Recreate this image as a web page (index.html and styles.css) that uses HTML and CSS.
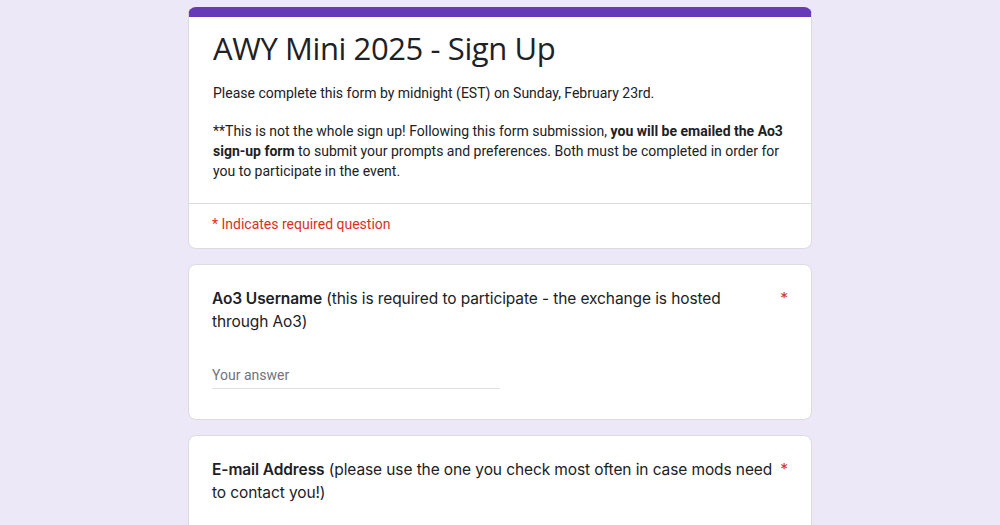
FILE: index.html
```html
<!DOCTYPE html>
<html lang="en">
<head>
<meta charset="utf-8">
<title>AWY Mini 2025 - Sign Up</title>
<link rel="stylesheet" href="styles.css">
</head>
<body>
<main class="form">
  <section class="card header-card">
    <div class="header-main">
      <h1 class="form-title">AWY Mini 2025 - Sign Up</h1>
      <div class="form-desc">
        <p>Please complete this form by midnight (EST) on Sunday, February 23rd.</p>
        <p>**This is not the whole sign up! Following this form submission, <b>you will be emailed the Ao3 sign-up form</b> to submit your prompts and preferences. Both must be completed in order for you to participate in the event.</p>
      </div>
    </div>
    <div class="required-note">* Indicates required question</div>
  </section>

  <section class="card question">
    <div class="q-title">
      <span class="q-text"><b>Ao3 Username</b> (this is required to participate - the exchange is hosted through Ao3)</span>
      <span class="q-req">*</span>
    </div>
    <div class="answer">Your answer</div>
  </section>

  <section class="card question">
    <div class="q-title">
      <span class="q-text"><b>E-mail Address</b> (please use the one you check most often in case mods need to contact you!)</span>
      <span class="q-req">*</span>
    </div>
    <div class="answer">Your answer</div>
  </section>
</main>
</body>
</html>
```

FILE: styles.css
```css
* { box-sizing: border-box; }

body {
  margin: 0;
  background: #ede8f7;
  font-family: Roboto, "Liberation Sans", sans-serif;
  color: #202124;
}

.form {
  width: 624px;
  margin: 0 auto;
  padding-top: 7px;
  display: flex;
  flex-direction: column;
  gap: 15px;
}

.card {
  background: #fff;
  border: 1px solid #dadce0;
  border-radius: 8px;
}

.header-card {
  border-top: 10px solid #673ab7;
}

.header-main {
  padding: 11px 24px 22px;
  border-bottom: 1px solid #dadce0;
}

.form-title {
  margin: 0;
  font-family: "Open Sans", Inter, sans-serif;
  font-weight: 400;
  font-size: 31px;
  line-height: 40px;
  letter-spacing: -0.4px;
  color: #202124;
}

.form-desc {
  margin-top: 15px;
  font-size: 14px;
  line-height: 20px;
  color: #202124;
}

.form-desc p { margin: 0; }
.form-desc p + p { margin-top: 18px; }
.form-desc b { font-weight: 700; }

.required-note {
  padding: 10px 23px 14px;
  font-size: 14px;
  line-height: 20px;
  color: #d93025;
}

.question {
  padding: 22px 20px 30px 23px;
}

.q-title {
  display: flex;
  justify-content: space-between;
  gap: 2px;
  font-family: Inter, "Open Sans", sans-serif;
  font-size: 15.5px;
  line-height: 23px;
  letter-spacing: -0.1px;
  color: #202124;
}

.q-text b { font-weight: 600; }

.q-req {
  color: #d93025;
  padding-right: 3px;
}

.answer {
  margin-top: 32px;
  width: 288px;
  padding-bottom: 3px;
  border-bottom: 1px solid #e0e0e0;
  font-size: 14px;
  line-height: 20px;
  color: #70757a;
}
```
